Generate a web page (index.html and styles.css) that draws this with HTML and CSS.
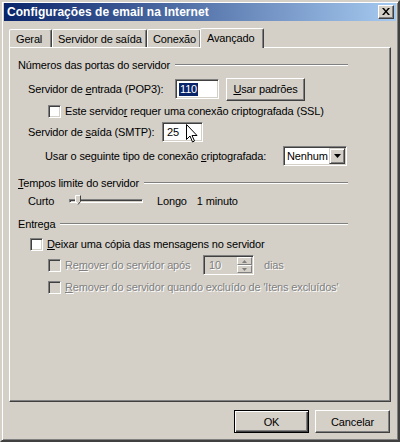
FILE: index.html
```html
<!DOCTYPE html>
<html lang="pt">
<head>
<meta charset="utf-8">
<title>Configurações de email na Internet</title>
<link rel="stylesheet" href="styles.css">
</head>
<body>
<div class="window">
  <div class="titlebar">
    <span class="title">Configurações de email na Internet</span>
    <span class="close"><svg width="8" height="7" viewBox="0 0 8 7"><path d="M0 0h2l2 2.5L6 0h2L5 3.5 8 7H6L4 4.5 2 7H0l3-3.5z" fill="#000"/></svg></span>
  </div>
  <div class="tabs">
    <div class="tab t-geral">Geral</div>
    <div class="tab t-saida">Servidor de saída</div>
    <div class="tab t-conexao">Conexão</div>
    <div class="tab active">Avançado</div>
  </div>
  <div class="panel">
    <div class="group-head h1"><span>Números das portas do servidor</span><i class="etch"></i></div>
    <div class="row r-pop">
      <span class="lbl l-pop">Servidor de <u>e</u>ntrada (POP3):</span>
      <span class="field f-pop"><span class="sel">110</span></span>
      <span class="btn b-usar"><u>U</u>sar padrões</span>
    </div>
    <div class="row r-ssl">
      <span class="cb"></span>
      <span>Este servido<u>r</u> requer uma conexão criptografada (SSL)</span>
    </div>
    <div class="row r-smtp">
      <span class="lbl l-smtp">Servidor de <u>s</u>aída (SMTP):</span>
      <span class="field f-smtp">25</span>
    </div>
    <div class="row r-enc">
      <span>Usar o seguinte tipo de conexão <u>c</u>riptografada:</span>
      <span class="select"><span class="sv">Nenhum</span><span class="drop"><svg width="7" height="4" viewBox="0 0 7 4"><path d="M0 0h7L3.5 4z" fill="#000"/></svg></span></span>
    </div>
    <div class="group-head h2"><span><u>T</u>empos limite do servidor</span><i class="etch"></i></div>
    <div class="row r-slider">
      <span class="curto">Curto</span>
      <span class="track"><span class="thumb"><svg width="6" height="10" viewBox="0 0 6 10"><path d="M0.5 0.5h5v6l-2.5 3-2.5-3z" fill="#d4d0c8"/><path d="M0.5 7V0.5h5" stroke="#fff" fill="none"/><path d="M5.5 0.5v6l-2.5 3" stroke="#404040" fill="none"/><path d="M0.5 6.5l2 2.5" stroke="#fff" fill="none"/></svg></span></span>
      <span class="longo">Longo</span>
      <span class="min">1 minuto</span>
    </div>
    <div class="group-head h3"><span>Entrega</span><i class="etch"></i></div>
    <div class="row r-deixar">
      <span class="cb"></span>
      <span><u>D</u>eixar uma cópia das mensagens no servidor</span>
    </div>
    <div class="row r-rem1">
      <span class="cb dis"></span>
      <span class="disabled l-rem">Re<u>m</u>over do servidor após</span>
      <span class="spin"><span class="sv disabled">10</span><span class="spinbtns"><span class="sb"><svg width="5" height="3" viewBox="0 0 5 3"><path d="M0 3h5L2.5 0z" fill="#808080"/></svg></span><span class="sb"><svg width="5" height="3" viewBox="0 0 5 3"><path d="M0 0h5L2.5 3z" fill="#808080"/></svg></span></span></span>
      <span class="disabled dias">dias</span>
    </div>
    <div class="row r-rem2">
      <span class="cb dis"></span>
      <span class="disabled"><u>R</u>emover do servidor quando excluído de 'Itens excluídos'</span>
    </div>
  </div>
  <div class="footer">
    <span class="btn default">OK</span>
    <span class="btn">Cancelar</span>
  </div>
  <svg class="cursor" width="12" height="19" viewBox="0 0 12 19"><path d="M0.5 0.5v15l3.5-3.5 2.5 6 2-1-2.5-5.5h5z" fill="#fff" stroke="#000" stroke-linejoin="miter"/></svg>
</div>
</body>
</html>
```
FILE: styles.css
```css
* { box-sizing: border-box; }
html, body { margin: 0; padding: 0; }
body {
  width: 400px; height: 442px; overflow: hidden;
  background: #d4d0c8;
  font-family: "Liberation Sans", Arial, sans-serif;
  font-size: 11px; color: #000;
  letter-spacing: -0.15px;
  white-space: nowrap;
}
.window {
  position: relative;
  width: 400px; height: 442px;
  background: #d4d0c8;
  border-style: solid; border-width: 2px;
  border-color: #d4d0c8 #404040 #404040 #d4d0c8;
  box-shadow: inset 1px 1px 0 #fff, inset -1px -1px 0 #808080;
  padding: 1px 1px 0 1px;
  display: flex; flex-direction: column;
}
.titlebar {
  height: 18px;
  margin: 0 1px;
  background: linear-gradient(to right, #0a246a, #a6caf0);
  display: flex; align-items: center; justify-content: space-between;
  padding: 0 2px 0 3px;
}
.title { color: #fff; font-weight: bold; font-size: 12px; letter-spacing: 0.05px; }
.close {
  width: 16px; height: 14px; background: #d4d0c8;
  border-style: solid; border-width: 1px;
  border-color: #fff #404040 #404040 #fff;
  box-shadow: inset -1px -1px 0 #808080;
  display: flex; align-items: center; justify-content: center;
  padding-bottom: 1px;
}
.tabs {
  display: flex; align-items: flex-end;
  height: 26px;
  padding-left: 6px;
  position: relative; z-index: 1;
}
.tab {
  flex: none;
  height: 18px;
  padding: 0 5px;
  display: flex; align-items: center;
  border-style: solid; border-width: 1px 1px 0 1px;
  border-color: #fff #404040 transparent #fff;
  box-shadow: inset -1px 0 0 #808080;
  border-radius: 2px 2px 0 0;
  background: #d4d0c8;
}
.t-geral { width: 43px; padding-left: 6px; }
.t-saida { width: 95px; }
.t-conexao { width: 54px; }
.tab.active {
  height: 20px; width: 64px;
  margin-left: -1px;
  margin-bottom: -1px;
  padding-bottom: 2px;
  padding-left: 6px;
}
.panel {
  margin: 0 6px 0 6px;
  height: 355px;
  border-style: solid; border-width: 1px;
  border-color: #fff #404040 #404040 #fff;
  box-shadow: inset -1px -1px 0 #808080;
  padding: 0 42px 0 8px;
  display: flex; flex-direction: column;
}
.group-head {
  display: flex; align-items: center; height: 14px;
}
.group-head .etch {
  flex: 1; height: 2px; margin-left: 5px;
  border-top: 1px solid #808080; border-bottom: 1px solid #fff;
}
.h1 { margin-top: 10px; }
.h2 { margin-top: 10px; }
.h3 { margin-top: 7px; }
.row { display: flex; align-items: center; }
.lbl { padding-left: 10px; flex: none; }
.l-pop { width: 157px; }
.l-smtp { width: 144px; }
.r-pop { height: 22px; margin-top: 6px; }
.r-ssl { height: 14px; margin-top: 4px; padding-left: 30px; }
.r-smtp { height: 20px; margin-top: 4px; }
.r-enc { height: 20px; margin-top: 4px; padding-left: 27px; padding-right: 1px; }
.r-slider { height: 18px; margin-top: 2px; padding-left: 10px; }
.r-deixar { height: 14px; margin-top: 6px; padding-left: 12px; }
.r-rem1 { height: 18px; margin-top: 5px; padding-left: 30px; }
.r-rem2 { height: 14px; margin-top: 6px; padding-left: 30px; }
.cb {
  width: 13px; height: 13px; flex: none;
  background: #fff;
  border-style: solid; border-width: 1px;
  border-color: #808080 #fff #fff #808080;
  box-shadow: inset 1px 1px 0 #404040, inset -1px -1px 0 #d4d0c8;
  margin-right: 4px;
}
.cb.dis { background: #d4d0c8; }
.disabled { color: #808080; text-shadow: 1px 1px 0 #fff; }
.field, .select, .spin {
  height: 20px;
  background: #fff;
  border-style: solid; border-width: 1px;
  border-color: #808080 #fff #fff #808080;
  box-shadow: inset 1px 1px 0 #404040, inset -1px -1px 0 #d4d0c8;
  display: flex; align-items: center;
  padding: 0 3px;
  flex: none;
}
.f-pop { width: 44px; }
.sel { background: #0a246a; color: #fff; padding: 0 1px; line-height: 13px; }
.f-smtp { width: 41px; padding-left: 4px; }
.btn {
  display: flex; align-items: center; justify-content: center;
  background: #d4d0c8;
  border-style: solid; border-width: 1px;
  border-color: #fff #404040 #404040 #fff;
  box-shadow: inset -1px -1px 0 #808080;
  flex: none;
}
.b-usar { width: 79px; height: 23px; margin-left: 7px; }
.select { width: 64px; margin-left: auto; padding: 0 2px 0 3px; justify-content: space-between; }
.drop {
  width: 16px; height: 16px;
  background: #d4d0c8;
  border-style: solid; border-width: 1px;
  border-color: #d4d0c8 #404040 #404040 #d4d0c8;
  box-shadow: inset 1px 1px 0 #fff, inset -1px -1px 0 #808080;
  display: flex; align-items: center; justify-content: center;
  margin-right: -1px;
}
.curto { width: 41px; }
.track {
  position: relative;
  width: 74px; height: 4px;
  border-style: solid; border-width: 1px;
  border-color: #808080 #fff #fff #808080;
  box-shadow: inset 1px 1px 0 #404040, inset -1px -1px 0 #d4d0c8;
  margin-top: -1px;
}
.thumb { position: absolute; left: 5px; top: -5px; display: block; line-height: 0; }
.longo { margin-left: 14px; }
.min { margin-left: 10px; }
.l-rem { width: 138px; flex: none; }
.spin {
  width: 51px; background: #d4d0c8;
  padding: 0 2px 0 5px; justify-content: space-between;
}
.spinbtns { display: flex; flex-direction: column; margin-right: -1px; }
.sb {
  width: 15px; height: 8px;
  background: #d4d0c8;
  border-style: solid; border-width: 1px;
  border-color: #fff #808080 #808080 #fff;
  display: flex; align-items: center; justify-content: center;
}
.dias { margin-left: 10px; }
.footer {
  display: flex; justify-content: flex-end; gap: 6px;
  padding: 8px 7px 0 0;
}
.footer .btn { width: 75px; height: 23px; }
.footer .btn.default {
  border-color: #000;
  box-shadow: inset 1px 1px 0 #fff, inset -1px -1px 0 #404040, inset -2px -2px 0 #808080;
}
.cursor { position: absolute; left: 184px; top: 122px; }
u { text-decoration: underline; text-underline-offset: 1px; }
```
